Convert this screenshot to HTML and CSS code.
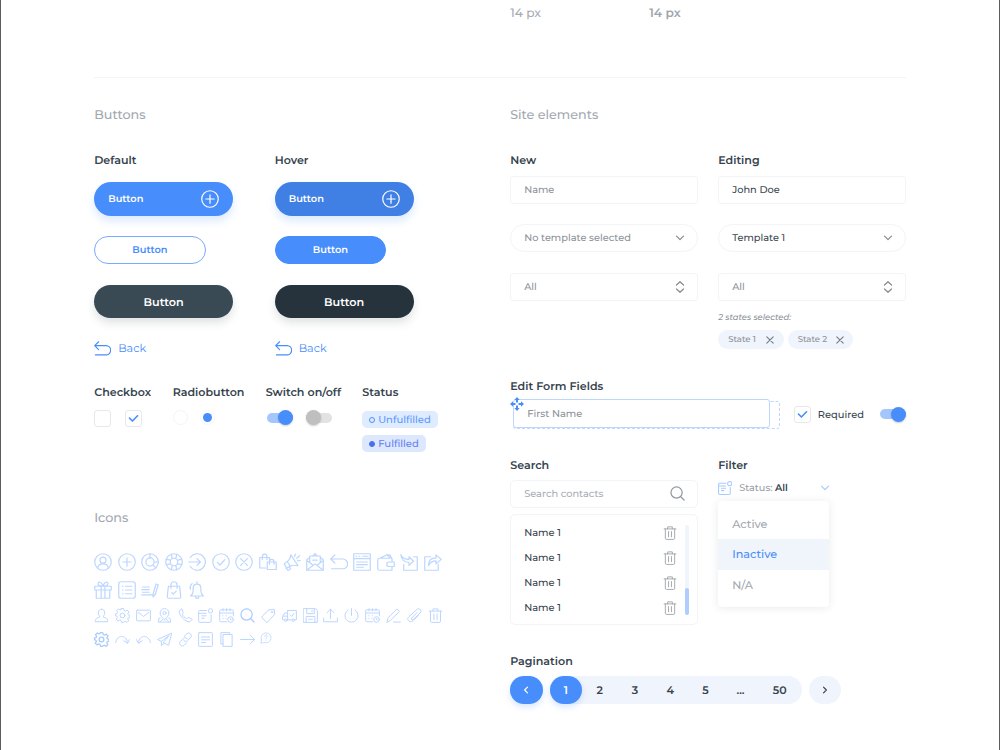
FILE: index.html
```html
<!DOCTYPE html>
<html lang="en">
<head>
<meta charset="utf-8">
<title>UI kit</title>
<link rel="stylesheet" href="styles.css">
</head>
<body>
<svg class="sprite" aria-hidden="true">
  <symbol id="user-circle" viewBox="0 0 24 24"><circle cx="12" cy="12" r="11"/><circle cx="12" cy="9.500" r="4"/><path d="M5 19.500c.8-3.600 3.500-5 7-5s6.200 1.400 7 5"/></symbol>
  <symbol id="plus-circle" viewBox="0 0 24 24"><circle cx="12" cy="12" r="11"/><path d="M12 6.500v11M6.500 12h11"/></symbol>
  <symbol id="chart" viewBox="0 0 24 24"><circle cx="12" cy="12" r="11"/><circle cx="12" cy="12" r="5.500"/><path d="M12 1v5.500M17.500 12H23M15.800 15.800l4 4"/></symbol>
  <symbol id="lifebuoy" viewBox="0 0 24 24"><circle cx="12" cy="12" r="11"/><circle cx="12" cy="12" r="5"/><path d="M8.500 1.800l1 5.500M15.500 1.800l-1 5.500M8.500 22.200l1-5.500M15.500 22.200l-1-5.500M1.800 8.500l5.500 1M1.800 15.500l5.500-1M22.200 8.500l-5.500 1M22.200 15.500l-5.500-1"/></symbol>
  <symbol id="enter" viewBox="0 0 24 24"><path d="M3 6a11 11 0 1 1 0 12M1 12h15M12 7.500l4.500 4.500-4.500 4.500"/></symbol>
  <symbol id="check-circle" viewBox="0 0 24 24"><circle cx="12" cy="12" r="11"/><path d="M7 12.500l3.500 3.500 6.500-7"/></symbol>
  <symbol id="x-circle" viewBox="0 0 24 24"><circle cx="12" cy="12" r="11"/><path d="M7.500 7.500l9 9M16.500 7.500l-9 9"/></symbol>
  <symbol id="bags" viewBox="0 0 24 24"><path d="M9 20H1V6h13v4M4.500 9V4.500a3 3 0 0 1 6 0V9M11 12h12v10H11zM14 15v-3.500a3 3 0 0 1 6 0V15"/></symbol>
  <symbol id="megaphone" viewBox="0 0 24 24"><path d="M10.500 2.500L20 17c-4-1-8-1-11 1l-4 2-3.500-5.500 4-3c3-2 4.500-5 5-9zM6 12l3.500 5.500M4 20l3 3.500 3-2-1.500-3M15.500 5l1-3.500M18.500 7l3.500-3.500M19.500 10.500l3.500-.5"/></symbol>
  <symbol id="mail-open" viewBox="0 0 24 24"><path d="M1 9v14h22V9M1 9l4-3M23 9l-4-3M5 12.500V4h14v8.500M1 10l8 6M23 10l-8 6M1 23l11-8.500L23 23M9 4l3-3 3 3M9 9.500h6"/></symbol>
  <symbol id="back" viewBox="0 0 24 24"><path d="M6.500 2.500L1 8l5.500 5.500M1 8h16a6.500 6.500 0 0 1 0 13H2"/></symbol>
  <symbol id="browser" viewBox="0 0 24 24"><path d="M1 1h22v22H1zM1 7.500h22M4 4.300h1M8 4.300h1M13 4.300h7M5 12h14M5 15.500h14M5 19h9"/></symbol>
  <symbol id="wallet" viewBox="0 0 24 24"><path d="M20 12V7H3a2 2 0 0 0-2 2v12a2 2 0 0 0 2 2h17v-5M5 6.500L14 2l3 4.500M14 3.500l3-1 2.500 4M16 12h7v6h-7a3 3 0 0 1 0-6z"/></symbol>
  <symbol id="import" viewBox="0 0 24 24"><path d="M18 5h5v18H5v-8M1 2c2 5 6 6.500 11 6.500V5l6 6-6 5.500v-4C6 12.500 2 9 1 2z"/></symbol>
  <symbol id="export" viewBox="0 0 24 24"><path d="M9 5H1v18h18v-8M6 17C6 10 10 6.500 16 6.500V2.500l7 6-7 6v-4c-5 0-8 2-10 6.500z"/></symbol>
  <symbol id="gift" viewBox="0 0 24 24"><path d="M1 7h22v5H1zM3 12h18v11H3zM9.500 7v16M14.500 7v16M12 7C6 7 5 5 5.500 3S10 0 12 7c2-7 6-6 6.500-4S18 7 12 7z"/></symbol>
  <symbol id="list" viewBox="0 0 24 24"><rect x="1" y="1" width="22" height="22" rx="3"/><path d="M6 7h.8M10 7h8.500M6 12h.8M10 12h8.500M6 17h.8M10 17h8.500"/></symbol>
  <symbol id="sign" viewBox="0 0 24 24"><path d="M2 8h9M1 11.500h10M2 15h9M1 18.500h14M16 18l4-14 3 1-4 13-3 3z"/></symbol>
  <symbol id="bag-check" viewBox="0 0 24 24"><path d="M4.500 7h15L21 21a2 2 0 0 1-2 2H5a2 2 0 0 1-2-2zM8 10V5a4 4 0 0 1 8 0v5M9 15.500l2 2 4-4"/></symbol>
  <symbol id="bell" viewBox="0 0 24 24"><path d="M6 17c1.500-2.500.5-6 1-9 1-5 9-5 10 0 .5 3-.5 6.500 1 9l2.500 3h-17zM10 20.500c0 3.500 4.500 3.500 4.500 0M12 3.500V1M3 11c-.5-3 .5-6 2.500-7.500"/></symbol>
  <symbol id="user" viewBox="0 0 24 24"><path d="M12 2c6.500 0 6 8 3 11v1.500c3 1.500 7 1 7 7.500H2c0-6.500 4-6 7-7.500V13C6 10 5.500 2 12 2z"/></symbol>
  <symbol id="gear" viewBox="0 0 24 24"><circle cx="12" cy="12" r="3.800"/><path d="M10 1h4l.8 3.300 1.800.8 3-1.800 2.800 2.900-1.800 2.900.8 1.900 2.400.5v3l-2.600.9-.8 2 1.700 2.800-2.800 2.800-2.900-1.800-1.900.8L13.700 23h-3.200l-.9-3.200-1.900-.8-3 1.700-2.700-2.800L3.800 15 3 13.200 1 12.500v-3l2.300-.6.9-1.900-1.700-2.800 2.700-2.700 2.900 1.700 1.300-.6z"/></symbol>
  <symbol id="mail" viewBox="0 0 24 24"><rect x="1" y="3.500" width="22" height="17" rx="1"/><path d="M3.500 7l8.500 6.500L20.500 7"/></symbol>
  <symbol id="pin" viewBox="0 0 24 24"><path d="M12 19c-4-4-7-7-7-11a7 7 0 0 1 14 0c0 4-3 7-7 11zM5 16H3.500L2 22.500h20L20.500 16H19M5 22l4-4M19 22l-4-4"/><circle cx="12" cy="8" r="2.500"/></symbol>
  <symbol id="phone" viewBox="0 0 24 24"><path d="M5 2L2 5c-2 4 10 19 17 17l3-3c1-1 0-2-1-2l-4-2c-1 0-2 2-3 2-2 0-7-5-7-7 0-1 2-1 1-3L7 3c-.5-1-1-1.500-2-1z"/></symbol>
  <symbol id="note" viewBox="0 0 24 24"><path d="M13.500 4H3a2 2 0 0 0-2 2v15a2 2 0 0 0 2 2h16a2 2 0 0 0 2-2V11M1 8.500h12M6 12.500h7M6 16.500h4"/><circle cx="20" cy="4.500" r="3.500"/></symbol>
  <symbol id="calendar" viewBox="0 0 24 24"><path d="M12.500 22H3a2 2 0 0 1-2-2V5a2 2 0 0 1 2-2h18a2 2 0 0 1 2 2v7.500M2 8h20M6.500 1v3.500M12 1v3.500M17.500 1v3.500M6 12.500h.5M11.500 12.500h.5M6 17h.5M11 17h.5"/><circle cx="18.500" cy="18.500" r="4.500"/><path d="M18.500 17v2h1"/></symbol>
  <symbol id="search" viewBox="0 0 24 24"><circle cx="10.500" cy="10.500" r="9"/><path d="M17 17l5.500 5.500"/></symbol>
  <symbol id="tag" viewBox="0 0 24 24"><path d="M13 3l8-1 1 8-11 12a2 2 0 0 1-3 0l-6-6a2 2 0 0 1 0-3z"/><circle cx="17.500" cy="6.500" r="1"/></symbol>
  <symbol id="truck" viewBox="0 0 24 24"><path d="M9 4h14v15h-3M16 19H8M9 4v15M9 8H4.500L1 13v6h3M2 13h7M13 11l2.500 2.500L19 9"/><circle cx="6" cy="19.500" r="2"/><circle cx="18" cy="19.500" r="2"/></symbol>
  <symbol id="save" viewBox="0 0 24 24"><path d="M1 1h19l3 3v19H1zM6 1v8h12V1M14.500 4v2M5 23v-9.500h14V23M9 18h6"/></symbol>
  <symbol id="upload" viewBox="0 0 24 24"><path d="M1 16v6h22v-6M12 17V2M6.500 7.500L12 2l5.500 5.500"/></symbol>
  <symbol id="power" viewBox="0 0 24 24"><path d="M6.500 3.200a10.500 10.500 0 1 0 11 0M12 1v11"/></symbol>
  <symbol id="pencil" viewBox="0 0 24 24"><path d="M1.500 22.500L3.500 15.500 17.500 1.500 21.500 5.500 7.500 19.500zM12 22.500h11"/></symbol>
  <symbol id="clip" viewBox="0 0 24 24"><path d="M16 7.500L7.500 16c-1.500 2 .5 4 2.500 2.500L21 8c4-5-2-9-6-5L3 14c-5 5 2 11 7 6l8-8"/></symbol>
  <symbol id="trash" viewBox="0 0 24 24"><path d="M2 5h20M8 5V1.500h8V5M4 5v16a2 2 0 0 0 2 2h12a2 2 0 0 0 2-2V5M9.500 9.500v9M14.500 9.500v9"/></symbol>
  <symbol id="redo" viewBox="0 0 24 24"><path d="M1 17C3 4 18 3 20 17M14 14l6 4 3.500-6"/></symbol>
  <symbol id="undo" viewBox="0 0 24 24"><path d="M23 17C21 4 6 3 4 17M10 14l-6 4-3.500-6"/></symbol>
  <symbol id="plane" viewBox="0 0 24 24"><path d="M23 2L1 12l6 3 12-9-9 11 8 4zM7 15v7l4-4"/></symbol>
  <symbol id="link" viewBox="0 0 24 24"><path d="M10 7l4-4c4-4 10 2 6 6l-5 5c-2 2-5 1-6-1M14 17l-4 4c-4 4-10-2-6-6l5-5c2-2 5-1 6 1"/></symbol>
  <symbol id="doc" viewBox="0 0 24 24"><rect x="1" y="1" width="22" height="22" rx="1"/><path d="M5.500 8h13M5.500 12.500h13M5.500 17h7"/></symbol>
  <symbol id="copy" viewBox="0 0 24 24"><path d="M7 4h14v19H7zM17 4V1H3v18h4"/></symbol>
  <symbol id="arrow" viewBox="0 0 24 24"><path d="M1 12h22M16 5l7 7-7 7"/></symbol>
  <symbol id="help" viewBox="0 0 24 24"><path d="M2 22l1-6a10 10 0 1 1 5 5zM9.500 9c0-4 5-4 5-1 0 2-2.500 2-2.500 5M12 16v.5"/></symbol>
  <symbol id="chev-down" viewBox="0 0 10 10"><path d="M1.500 3.200l3.500 3.500 3.500-3.500"/></symbol>
  <symbol id="updown" viewBox="0 0 10 14"><path d="M1.500 5L5 1.700 8.500 5M1.500 9L5 12.300 8.500 9"/></symbol>
  <symbol id="cross" viewBox="0 0 10 10"><path d="M1.800 1.800l6.400 6.400M8.200 1.800l-6.400 6.400"/></symbol>
  <symbol id="tick" viewBox="0 0 12 10"><path d="M1.500 4.500l3.300 3.300 5.700-5.800"/></symbol>
  <symbol id="move" viewBox="0 0 14 14"><path class="solid" d="M7 0l2.700 3H8v2.500H6V3H4.300zM7 14l2.700-3H8V8.500H6V11H4.300zM0 7l3-2.700V6h2.500v2H3v1.700zM14 7l-3-2.700V6H8.500v2H11v1.700z"/></symbol>
</svg>

<div class="sheet">
  <div class="type-row"><span>14 px</span><span class="semi">14 px</span></div>
  <div class="columns">
    <section class="left">
      <h2>Buttons</h2>
      <div class="button-cols">
        <div class="button-col">
          <h3>Default</h3>
          <div class="btn btn-main"><span>Button</span><svg class="ic18"><use href="#plus-circle"/></svg></div>
          <div class="btn btn-outline">Button</div>
          <div class="btn btn-dark">Button</div>
          <div class="back"><svg><use href="#back"/></svg><span>Back</span></div>
        </div>
        <div class="button-col">
          <h3>Hover</h3>
          <div class="btn btn-main hover"><span>Button</span><svg class="ic18"><use href="#plus-circle"/></svg></div>
          <div class="btn btn-outline hover">Button</div>
          <div class="btn btn-dark hover">Button</div>
          <div class="back"><svg><use href="#back"/></svg><span>Back</span></div>
        </div>
      </div>
      <div class="controls">
        <div><h3>Checkbox</h3><div class="ctl checks"><span class="box"></span><span class="box"><svg><use href="#tick"/></svg></span></div></div>
        <div><h3>Radiobutton</h3><div class="ctl radios"><span class="radio"></span><span class="radio on"></span></div></div>
        <div><h3>Switch on/off</h3><div class="ctl switches"><span class="switch on"></span><span class="switch off"></span></div></div>
        <div><h3>Status</h3><div class="badges"><span class="badge"><i></i>Unfulfilled</span><span class="badge full"><i></i>Fulfilled</span></div></div>
      </div>
      <h2 class="icons-title">Icons</h2>
      <div class="icons big">
        <svg><use href="#user-circle"/></svg><svg><use href="#plus-circle"/></svg><svg><use href="#chart"/></svg><svg><use href="#lifebuoy"/></svg><svg><use href="#enter"/></svg><svg><use href="#check-circle"/></svg><svg><use href="#x-circle"/></svg><svg><use href="#bags"/></svg><svg><use href="#megaphone"/></svg><svg><use href="#mail-open"/></svg><svg><use href="#back"/></svg><svg><use href="#browser"/></svg><svg><use href="#wallet"/></svg><svg><use href="#import"/></svg><svg><use href="#export"/></svg>
      </div>
      <div class="icons big second">
        <svg><use href="#gift"/></svg><svg><use href="#list"/></svg><svg><use href="#sign"/></svg><svg><use href="#bag-check"/></svg><svg><use href="#bell"/></svg>
      </div>
      <div class="icons small">
        <svg><use href="#user"/></svg><svg><use href="#gear"/></svg><svg><use href="#mail"/></svg><svg><use href="#pin"/></svg><svg><use href="#phone"/></svg><svg><use href="#note"/></svg><svg><use href="#calendar"/></svg><svg class="bold"><use href="#search"/></svg><svg><use href="#tag"/></svg><svg><use href="#truck"/></svg><svg><use href="#save"/></svg><svg><use href="#upload"/></svg><svg><use href="#power"/></svg><svg><use href="#calendar"/></svg><svg><use href="#pencil"/></svg><svg><use href="#clip"/></svg><svg><use href="#trash"/></svg>
      </div>
      <div class="icons small last">
        <svg class="bold"><use href="#gear"/></svg><svg><use href="#redo"/></svg><svg><use href="#undo"/></svg><svg><use href="#plane"/></svg><svg><use href="#link"/></svg><svg><use href="#doc"/></svg><svg><use href="#copy"/></svg><svg><use href="#arrow"/></svg><svg class="tiny"><use href="#help"/></svg>
      </div>
    </section>

    <section class="right">
      <h2>Site elements</h2>
      <div class="fields">
        <div>
          <h3>New</h3>
          <div class="field">Name</div>
          <div class="field pill">No template selected<svg class="chev"><use href="#chev-down"/></svg></div>
          <div class="field">All<svg class="ud"><use href="#updown"/></svg></div>
        </div>
        <div>
          <h3>Editing</h3>
          <div class="field ink">John Doe</div>
          <div class="field pill ink">Template 1<svg class="chev"><use href="#chev-down"/></svg></div>
          <div class="field">All<svg class="ud"><use href="#updown"/></svg></div>
          <div class="states">2 states selected:</div>
          <div class="tags"><span>State 1<svg><use href="#cross"/></svg></span><span>State 2<svg><use href="#cross"/></svg></span></div>
        </div>
      </div>
      <h3>Edit Form Fields</h3>
      <div class="edit-row">
        <div class="drag"><div class="drag-field">First Name</div><svg class="move"><use href="#move"/></svg></div>
        <span class="box"><svg><use href="#tick"/></svg></span>
        <span class="required">Required</span>
        <span class="switch on"></span>
      </div>
      <div class="fields lower">
        <div>
          <h3>Search</h3>
          <div class="field search">Search contacts<svg><use href="#search"/></svg></div>
          <div class="names">
            <div class="name-list">
              <div><span>Name 1</span><svg><use href="#trash"/></svg></div>
              <div><span>Name 1</span><svg><use href="#trash"/></svg></div>
              <div><span>Name 1</span><svg><use href="#trash"/></svg></div>
              <div><span>Name 1</span><svg><use href="#trash"/></svg></div>
            </div>
            <div class="scroll"><i></i></div>
          </div>
        </div>
        <div>
          <h3>Filter</h3>
          <div class="filter"><svg class="note"><use href="#note"/></svg><span>Status: <b>All</b></span><svg class="chev"><use href="#chev-down"/></svg></div>
          <div class="menu"><div>Active</div><div class="sel">Inactive</div><div>N/A</div></div>
        </div>
      </div>
      <h3>Pagination</h3>
      <div class="pages">
        <span class="pg blue"><svg class="left-chev"><use href="#chev-down"/></svg></span>
        <div class="bar"><span class="pg blue">1</span><span>2</span><span>3</span><span>4</span><span>5</span><span>...</span><span class="wide">50</span></div>
        <span class="pg next"><svg class="right-chev"><use href="#chev-down"/></svg></span>
      </div>
    </section>
  </div>
</div>
</body>
</html>
```
FILE: styles.css
```css
* { box-sizing: border-box; }
body { margin: 0; font-family: Montserrat, Inter, "Liberation Sans", sans-serif; color: #36434d; background: #fff; text-rendering: geometricPrecision; }
svg { display: block; fill: none; stroke: currentColor; stroke-width: 1.6; stroke-linecap: round; stroke-linejoin: round; flex: none; }
.sprite { position: absolute; width: 0; height: 0; }
.solid { fill: currentColor; stroke: none; }
.sheet { width: 1000px; height: 750px; overflow: hidden; border: solid #5b5d60; border-width: 0 1px; padding: 0 93px 0 93.200px; }
.type-row { height: 78px; width: 812px; border-bottom: 1.500px solid #f4f5f6; padding: 3.500px 0 0 416px; display: flex; font-size: 12.200px; line-height: 20px; font-weight: 500; color: #a5abb1; }
.type-row span { width: 139px; flex: none; }
.type-row .semi { font-weight: 600; color: #a0a6ad; }
.columns { display: grid; grid-template-columns: 416px 396px; padding-top: 27.500px; }
h2 { margin: 0 0 24.500px; font-size: 12.700px; line-height: 20px; font-weight: 500; color: #a2a8af; }
h3 { margin: 0; font-size: 11.100px; line-height: 20px; font-weight: 600; white-space: nowrap; }

.button-cols { display: grid; grid-template-columns: 180.500px 180px; }
.btn { display: flex; align-items: center; justify-content: center; color: #fff; font-size: 9.800px; font-weight: 600; border-radius: 20px; }
.btn-main { width: 139px; height: 33.500px; margin-top: 12px; padding: 0 14px; justify-content: space-between; background: #478dfc; box-shadow: 0 5px 9px #478dfc30; }
.btn-main.hover { background: #4080e5; }
.btn-main span { padding-top: 1.500px; }
.ic18 { width: 18px; height: 18px; }
.btn-outline { width: 111.500px; height: 28px; margin-top: 20.500px; padding-top: 1px; border: 1px solid #78aafd; color: #478dfc; }
.btn-outline.hover { background: #478dfc; border-color: #478dfc; color: #fff; }
.btn-dark { width: 139px; height: 33.500px; margin-top: 20.500px; padding-top: 1px; background: #394a55; font-size: 11.200px; box-shadow: 0 5px 8px #36434d26; }
.btn-dark.hover { background: #26333c; }
.back { display: flex; align-items: center; gap: 7px; height: 20px; margin-top: 20px; color: #478dfc; font-size: 11.200px; }
.back svg { width: 17px; height: 17px; }

.controls { display: grid; grid-template-columns: 78.500px 93px 96.500px 90px; margin-top: 24px; }
.ctl { display: flex; align-items: center; height: 17px; margin-top: 8px; }
.checks { gap: 13.500px; }
.box { width: 17px; height: 17px; border: 1px solid #e6e8eb; border-radius: 3px; display: flex; align-items: center; justify-content: center; flex: none; }
.box svg { width: 11px; height: 9px; color: #478dfc; stroke-width: 1.8; }
.radios { gap: 12.500px; height: 15px; }
.radio { width: 15px; height: 15px; border: 1px solid #f4f5f6; border-radius: 50%; display: grid; place-items: center; }
.radio.on { border-color: #f7f8fa; }
.radio.on::after { content: ""; width: 9px; height: 9px; border-radius: 50%; background: #478dfc; }
.switches { gap: 13px; height: 15px; padding-left: 1px; }
.switch { display: flex; align-items: center; width: 26px; height: 10px; border-radius: 5px; background: #a3c6fd; flex: none; }
.switch::after { content: ""; width: 15px; height: 15px; flex: none; border-radius: 50%; background: #478dfc; box-shadow: 0 1px 2px #0003; }
.switch.on { justify-content: flex-end; }
.switch.off { background: #e2e2e2; }
.switch.off::after { background: #bfbfbf; }
.badges { display: flex; flex-direction: column; align-items: flex-start; gap: 7px; margin-top: 9px; }
.badge { display: flex; align-items: center; gap: 3.500px; height: 17px; padding: 0 7px 0 6.500px; border-radius: 5px; background: #dfebff; color: #5c9afd; font-size: 10px; font-weight: 500; }
.badge i { width: 6px; height: 6px; border: 1px solid #478dfc; border-radius: 50%; }
.badge.full { color: #6480f3; background: #dde8fd; }
.badge.full i { background: #4c6ff0; border-color: #4c6ff0; }

.icons-title { margin: 56.800px 0 24.400px; }
.icons { display: flex; color: #bcd6ff; }
.icons svg { stroke-width: 1.6; }
.icons .bold { stroke-width: 2; color: #a8caff; }
.big { gap: 5.550px; height: 18px; }
.big svg { width: 18px; height: 18px; }
.second { margin-top: 9.500px; }
.small { gap: 5.850px; height: 15px; margin-top: 9px; }
.small svg { width: 15px; height: 15px; }
.last { margin-top: 9.500px; }
.small .tiny { width: 12px; height: 12px; margin-left: -1px; }

.fields { display: grid; grid-template-columns: 188px 188px; column-gap: 20px; height: 200px; }
.field { display: flex; align-items: center; justify-content: space-between; width: 188px; height: 28px; border: 1px solid #f3f4f5; border-radius: 3px; padding: 1.500px 12px 0 13px; margin-top: 20.500px; font-size: 9.800px; font-weight: 500; color: #8d9399; }
.field svg { margin-top: -1.500px; }
h3 + .field { margin-top: 5.500px; }
.pill { border-radius: 14px; }
.field.ink { color: #3b4750; }
.chev { width: 10px; height: 10px; color: #858b91; stroke-width: 1.2; }
.ud { width: 10px; height: 14px; color: #858b91; stroke-width: 1.2; }
.states { margin-top: 10px; font-size: 8.400px; line-height: 15px; font-style: italic; font-weight: 500; color: #8d9399; }
.tags { display: flex; gap: 4px; margin-top: 4.500px; }
.tags span { display: flex; align-items: center; justify-content: space-between; width: 65.500px; height: 19px; padding: 0 8.500px 0 10px; border-radius: 10px; background: #f0f4fc; font-size: 8.500px; font-weight: 500; color: #8d9399; }
.tags svg { width: 10px; height: 10px; stroke-width: 1.1; color: #747b82; }

.fields + h3 { margin-top: 25.500px; }
.edit-row { display: flex; align-items: center; height: 31px; margin-top: 3px; }
.drag { position: relative; width: 268px; height: 28px; margin: 1px 14px 0 3px; border: 1px dashed #bdd6fe; border-radius: 3px; }
.drag-field { width: 257px; height: 29px; margin: -3px 0 0 -1px; border: 1px solid #bdd6fe; border-radius: 3px; background: #fff; padding-left: 13px; line-height: 28.500px; font-size: 9.900px; font-weight: 500; color: #8d9399; }
.move { position: absolute; left: -4px; top: -5px; width: 14px; height: 14px; color: #478dfc; }
.required { width: 63px; padding: 1.500px 0 0 6.500px; font-size: 9.900px; font-weight: 500; }
.edit-row .switch { margin-left: 6px; }
.lower { height: 171px; margin-top: 25px; }
.field.search { border-radius: 5px; color: #a9aeb4; margin-top: 5px; }
.field.search svg { width: 15px; height: 15px; stroke-width: 2; color: #92989f; }
.names { display: flex; justify-content: space-between; width: 188px; height: 111px; margin-top: 6.500px; padding: 5px 8px 6px 13px; border: 1px solid #f3f4f5; border-radius: 5px; }
.name-list { width: 153px; }
.name-list div { display: flex; justify-content: space-between; align-items: center; height: 25px; font-size: 9.900px; font-weight: 500; }
.name-list svg { width: 14px; height: 14px; color: #9aa0a6; stroke-width: 1.5; }
.scroll { width: 4px; height: 90px; margin-top: 5px; border-radius: 2px; background: #f0f4fc; display: flex; align-items: flex-end; }
.scroll i { width: 4px; height: 27px; border-radius: 2px; background: #afcdfd; }
.filter { display: flex; align-items: center; width: 112px; height: 16px; margin-top: 5px; color: #9aa0a6; font-size: 9.700px; font-weight: 500; }
.filter span { padding-top: 1.500px; }
.filter b { color: #36434d; font-weight: 600; }
.filter .note { width: 14px; height: 14px; margin-right: 7px; color: #a9caff; stroke-width: 1.8; }
.filter .chev { margin-left: auto; color: #a9caff; }
.menu { width: 111px; height: 106px; margin-top: 5px; padding-top: 8px; border-radius: 4px; box-shadow: 0 1px 8px #36434d1c; font-size: 11.200px; font-weight: 500; color: #a2a8af; }
.menu div { height: 30.500px; line-height: 30.500px; padding-left: 14px; }
.menu .sel { background: #f0f4fb; color: #478dfc; }
.pages { display: flex; gap: 7px; margin-top: 5px; font-size: 11px; font-weight: 600; }
.pg { display: flex; align-items: center; justify-content: center; width: 32.500px; height: 28px; border-radius: 14px; background: #f0f4fc; }
.pages .blue { background: #478dfc; color: #fff; box-shadow: 0 3px 6px #478dfc38; }
.bar { display: flex; align-items: center; width: 252px; height: 28px; border-radius: 14px; background: #f0f4fc; }
.bar span:not(.pg) { width: 35.200px; text-align: center; }
.bar .wide.wide { width: 43px; }
.left-chev, .right-chev { width: 8px; height: 8px; stroke-width: 1.5; transform: rotate(90deg); }
.right-chev { transform: rotate(-90deg); }
```
